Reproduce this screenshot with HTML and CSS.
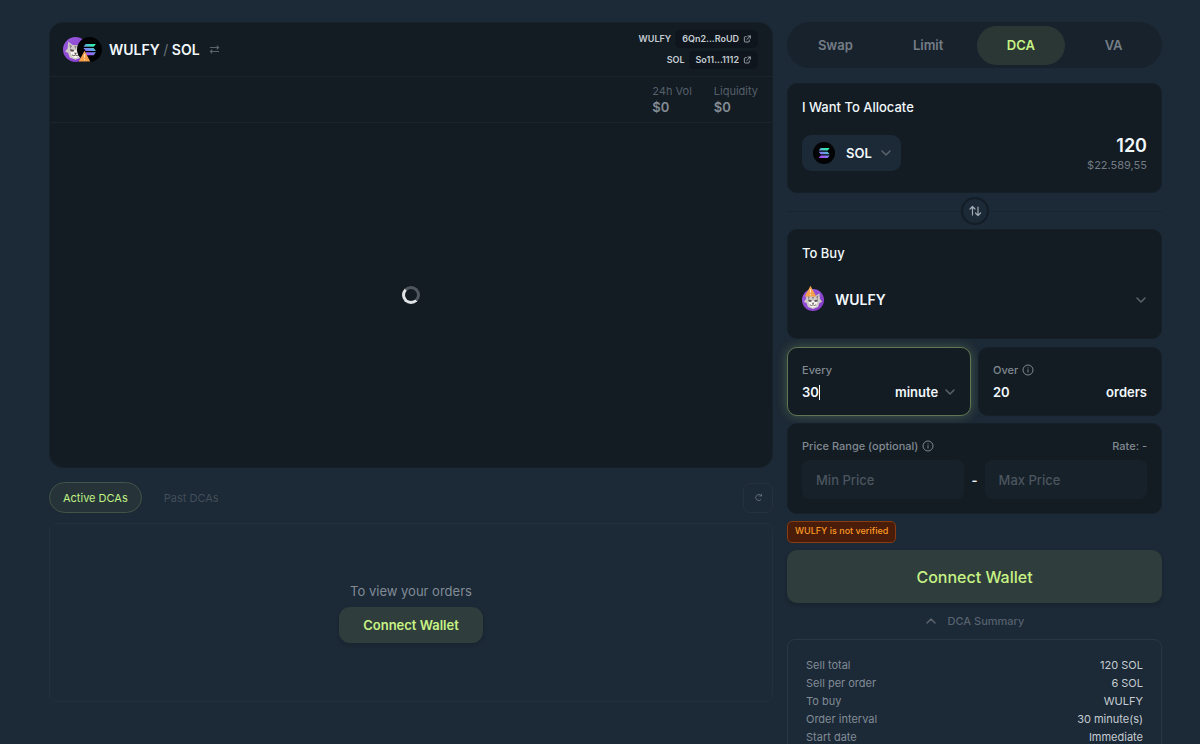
FILE: index.html
```html
<!DOCTYPE html>
<html lang="en">
<head>
  <meta charset="UTF-8">
  <meta name="viewport" content="width=device-width, initial-scale=1.0">
  <title>DCA | WULFY / SOL</title>
  <link rel="stylesheet" href="styles.css">
</head>
<body>
  <!-- Shared icons -->
  <svg class="sprite" aria-hidden="true">
    <defs>
      <linearGradient id="sol-fill" x1="0.2" y1="1" x2="0.8" y2="0">
        <stop offset="0" stop-color="#b045fb"/>
        <stop offset="0.5" stop-color="#6f93ea"/>
        <stop offset="0.9" stop-color="#2ff0ac"/>
      </linearGradient>
      <linearGradient id="wulfy-fill" x1="0" y1="0" x2="1" y2="1">
        <stop offset="0" stop-color="#9a5ce0"/>
        <stop offset="1" stop-color="#8238c4"/>
      </linearGradient>
    </defs>
    <symbol id="icon-sol" viewBox="0 0 24 24">
      <circle cx="12" cy="12" r="12" fill="#020304"/>
      <path fill="url(#sol-fill)" d="M8.4 6.600H18.200l-2.200 2.800H6.200zM6.200 10.600h9.800l2.200 2.800H8.400zM8.400 14.600H18.200l-2.200 2.800H6.200z"/>
    </symbol>
    <symbol id="icon-wulfy" viewBox="0 0 24 24">
      <circle cx="12" cy="12" r="12" fill="url(#wulfy-fill)"/>
      <path fill="#cfc9c8" d="M5 4.500l4.300 3.200h5.400L19 4.500l.6 6.500 2.400 3-3 1.400-1.400 4.200-5.600 2.200-5.600-2.200L5 15.400 2 14l2.400-3z"/>
      <path fill="#8b7f80" d="M6.200 6.800l2.400 2-1.800 2.400zM17.800 6.800l-2.400 2 1.800 2.400zM10.800 8.400h2.400L12 11.800z"/>
      <path fill="#f7f5ee" d="M7 14.400l5-1.800 5 1.800-1.800 4.600-3.200 1.400L8.800 19z"/>
      <path fill="#5b5055" d="M6.800 11.400l3.800 1-.6 1.800-2.800-.6zM17.200 11.400l-3.800 1 .6 1.800 2.800-.6zM10.600 15h2.800L12 17z"/>
      <path fill="none" stroke="#574b50" stroke-width=".9" d="M8.600 17.200q1.800 1.600 3.400 0 1.600 1.600 3.400 0"/>
    </symbol>
    <symbol id="icon-warning" viewBox="0 0 24 24">
      <path fill="#f5a04a" d="M12 1.500L23.500 23H.5z"/>
      <path fill="#ffe3b8" d="M10.700 8h2.600l-.5 8h-1.600zM10.800 18h2.400v2.400h-2.400z"/>
    </symbol>
    <symbol id="icon-chevron" viewBox="0 0 12 12">
      <path fill="none" stroke="currentColor" stroke-width="1.500" stroke-linecap="round" stroke-linejoin="round" d="M2 4l4 4 4-4"/>
    </symbol>
    <symbol id="icon-info" viewBox="0 0 12 12">
      <circle cx="6" cy="6" r="5" fill="none" stroke="currentColor"/>
      <path fill="none" stroke="currentColor" d="M6 5.300v3.200M6 3.400v1"/>
    </symbol>
    <symbol id="icon-external" viewBox="0 0 12 12">
      <path fill="none" stroke="currentColor" stroke-width="1.100" stroke-linecap="round" stroke-linejoin="round" d="M5 2.500H3.500q-1.500 0-1.500 1.500v5q0 1.500 1.500 1.500h4.500q1.500 0 1.500-1.500V7.500M7.500 1.500h3.500V5M11 1.500L5.500 7"/>
    </symbol>
  </svg>

  <main class="layout">
    <div class="market">
      <section class="chart">
        <header class="pair">
          <div class="pair-icons">
            <svg class="pair-coin"><use href="#icon-wulfy"/></svg>
            <svg class="pair-coin overlap"><use href="#icon-sol"/></svg>
            <svg class="pair-warning"><use href="#icon-warning"/></svg>
          </div>
          <h1>WULFY <span>/</span> SOL</h1>
          <button class="pair-flip" type="button" aria-label="Flip pair">
            <svg viewBox="0 0 12 12" width="11" height="11"><path fill="none" stroke="currentColor" stroke-width="1.200" d="M1 3.800H10.500M8.500 1.800l2 2-2 2M11 8.200H1.500M3.500 6.200l-2 2 2 2"/></svg>
          </button>
          <div class="addresses">
            <div class="address">WULFY <a href="#">6Qn2...RoUD <svg class="icon-small"><use href="#icon-external"/></svg></a></div>
            <div class="address">SOL <a href="#">So11...1112 <svg class="icon-small"><use href="#icon-external"/></svg></a></div>
          </div>
        </header>
        <dl class="stats">
          <div>
            <dt>24h Vol</dt>
            <dd>$0</dd>
          </div>
          <div>
            <dt>Liquidity</dt>
            <dd>$0</dd>
          </div>
        </dl>
        <div class="chart-body">
          <div class="spinner"></div>
        </div>
      </section>

      <nav class="order-tabs">
        <button class="order-tab active" type="button">Active DCAs</button>
        <button class="order-tab" type="button">Past DCAs</button>
        <button class="refresh" type="button" aria-label="Refresh">
          <svg viewBox="0 0 12 12" width="9" height="9"><path fill="none" stroke="currentColor" stroke-width="1.200" d="M9.500 8.500A4 4 0 1 1 9.500 3.500M10 1v3H7"/></svg>
        </button>
      </nav>

      <section class="orders">
        <p>To view your orders</p>
        <button class="connect-small" type="button">Connect Wallet</button>
      </section>
    </div>

    <div class="trade">
      <nav class="modes">
        <button type="button">Swap</button>
        <button type="button">Limit</button>
        <button class="active" type="button">DCA</button>
        <button type="button">VA</button>
      </nav>

      <section class="card token-card">
        <label for="amount">I Want To Allocate</label>
        <div class="row token-row">
          <button class="token-select" type="button">
            <svg class="coin"><use href="#icon-sol"/></svg>
            SOL
            <svg class="chevron"><use href="#icon-chevron"/></svg>
          </button>
          <div class="amount">
            <input id="amount" type="text" value="120">
            <span>$22.589,55</span>
          </div>
        </div>
      </section>

      <div class="divider">
        <button type="button" aria-label="Switch tokens">
          <svg viewBox="0 0 14 14" width="14" height="14"><path fill="none" stroke="currentColor" stroke-width="1.200" stroke-linecap="round" stroke-linejoin="round" d="M4.500 11V2.500M2 5l2.500-2.500L7 5M10 3v8.500M7.500 9l2.500 2.500L12.500 9"/></svg>
        </button>
      </div>

      <section class="card token-card">
        <h2>To Buy</h2>
        <button class="buy-select" type="button">
          <span class="coin-wrap">
            <svg class="coin"><use href="#icon-wulfy"/></svg>
            <svg class="coin-warning"><use href="#icon-warning"/></svg>
          </span>
          WULFY
          <svg class="chevron"><use href="#icon-chevron"/></svg>
        </button>
      </section>

      <div class="schedule">
        <div class="card field focused">
          <label for="every">Every</label>
          <div class="row">
            <span class="typed"><input id="every" type="text" value="30"><i class="caret"></i></span>
            <span class="unit">
              <select aria-label="Interval unit">
                <option>minute</option>
                <option>hour</option>
                <option>day</option>
                <option>week</option>
              </select>
              <svg class="chevron"><use href="#icon-chevron"/></svg>
            </span>
          </div>
        </div>
        <div class="card field">
          <label for="over">Over <svg class="icon-info"><use href="#icon-info"/></svg></label>
          <div class="row">
            <input id="over" type="text" value="20">
            <span>orders</span>
          </div>
        </div>
      </div>

      <section class="card range">
        <div class="row range-head">
          <span class="range-title">Price Range (optional) <svg class="icon-info"><use href="#icon-info"/></svg></span>
          <span>Rate: -</span>
        </div>
        <div class="range-inputs">
          <input type="text" placeholder="Min Price" aria-label="Min Price">
          <span>-</span>
          <input type="text" placeholder="Max Price" aria-label="Max Price">
        </div>
      </section>

      <div class="unverified">WULFY is not verified</div>
      <button class="connect" type="button">Connect Wallet</button>
      <button class="summary-toggle" type="button">
        <svg class="chevron up"><use href="#icon-chevron"/></svg>
        DCA Summary
      </button>

      <dl class="summary">
        <div class="row"><dt>Sell total</dt><dd>120 SOL</dd></div>
        <div class="row"><dt>Sell per order</dt><dd>6 SOL</dd></div>
        <div class="row"><dt>To buy</dt><dd>WULFY</dd></div>
        <div class="row"><dt>Order interval</dt><dd>30 minute(s)</dd></div>
        <div class="row"><dt>Start date</dt><dd>Immediate</dd></div>
      </dl>
    </div>
  </main>
</body>
</html>
```

FILE: styles.css
```css
* {
  box-sizing: border-box;
}
html {
  scrollbar-width: none;
}
body {
  margin: 0;
  background: #1c2936;
  color: #f1f8fb;
  font-family: Inter, sans-serif;
  font-size: 13px;
  line-height: 18px;
}
h1, h2, p, dl, dd {
  margin: 0;
}
button, input, select {
  margin: 0;
  padding: 0;
  border: 0;
  outline: 0;
  background: none;
  color: inherit;
  font: inherit;
}
button {
  cursor: pointer;
}
svg {
  flex-shrink: 0;
}
.sprite {
  position: absolute;
  width: 0;
  height: 0;
}
.layout {
  display: grid;
  grid-template-columns: minmax(0, 1fr) 375px;
  gap: 14px;
  padding: 22px 38px 24px 49px;
}
.row {
  display: flex;
  align-items: center;
  justify-content: space-between;
}
.chevron {
  width: 12px;
  height: 12px;
  color: #5b646d;
}
.chevron.up {
  transform: rotate(180deg);
}

/* Chart */
.chart {
  display: flex;
  flex-direction: column;
  height: 446px;
  background: #131b23;
  border: 1px solid #17212a;
  border-radius: 14px;
}
.pair {
  display: flex;
  align-items: center;
  height: 54px;
  padding: 0 14px 0 13px;
  border-bottom: 1px solid #1a242e;
}
.pair-icons {
  position: relative;
  display: flex;
  margin-right: 7px;
}
.pair-coin {
  width: 25px;
  height: 25px;
}
.pair-coin.overlap {
  margin-left: -11px;
}
.pair-warning {
  position: absolute;
  left: 15px;
  bottom: 0;
  width: 13px;
  height: 12px;
}
.pair h1 {
  font-size: 14px;
  font-weight: 600;
}
.pair h1 span {
  color: #68727c;
  font-weight: 400;
}
.pair-flip {
  display: flex;
  margin-left: 9px;
  color: #5b646d;
}
.addresses {
  display: flex;
  flex-direction: column;
  align-items: flex-end;
  gap: 3px;
  margin-left: auto;
}
.address {
  display: flex;
  align-items: center;
  gap: 4px;
  color: #c5cdd3;
  font-size: 9px;
  font-weight: 600;
}
.address a {
  display: flex;
  align-items: center;
  gap: 4px;
  padding: 0 7px;
  border-radius: 5px;
  background: #0e151c;
  color: inherit;
  text-decoration: none;
}
.icon-small {
  width: 8px;
  height: 8px;
}
.stats {
  display: flex;
  justify-content: flex-end;
  gap: 22px;
  height: 46px;
  padding: 6px 14px 0;
  border-bottom: 1px solid #1a242e;
  font-size: 11px;
  line-height: 16px;
}
.stats dt {
  color: #56606a;
}
.stats dd {
  color: #838c94;
  font-size: 13px;
  font-weight: 600;
}
.chart-body {
  display: grid;
  flex: 1;
  place-items: center;
}
.spinner {
  width: 18px;
  height: 18px;
  border: 3px solid #50575e;
  border-bottom-color: #dfe3e5;
  border-left-color: #dfe3e5;
  border-radius: 50%;
}

/* Orders */
.order-tabs {
  display: flex;
  align-items: center;
  gap: 8px;
  margin: 14px 0 10px;
}
.order-tab {
  height: 31px;
  padding: 0 13px;
  border: 1px solid transparent;
  border-radius: 16px;
  color: #424e59;
  font-size: 11px;
}
.order-tab.active {
  border-color: #425347;
  background: #263439;
  color: #c0f284;
}
.refresh {
  display: grid;
  place-items: center;
  width: 30px;
  height: 30px;
  margin-left: auto;
  border: 1px solid #25323e;
  border-radius: 7px;
  color: #65717c;
}
.orders {
  display: flex;
  flex-direction: column;
  align-items: center;
  justify-content: center;
  gap: 7px;
  height: 179px;
  border: 1px solid #22303c;
  border-radius: 7px;
  color: #818c96;
}
.connect-small {
  height: 36px;
  padding: 0 24px;
  border-radius: 11px;
  background: #2f3d3c;
  box-shadow: 0 2px 4px rgba(0, 0, 0, 0.12);
  color: #c7f284;
  font-weight: 600;
}

/* Trade form */
.trade {
  display: flex;
  flex-direction: column;
}
.modes {
  display: grid;
  grid-template-columns: repeat(4, 1fr);
  gap: 4px;
  margin-bottom: 15px;
  padding: 4px 4px 3px;
  border-radius: 23px;
  background: #18222c;
}
.modes button {
  height: 39px;
  padding-bottom: 1px;
  border-radius: 20px;
  color: #747e87;
  font-weight: 600;
}
.modes .active {
  background: #2a3734;
  color: #c7f284;
}
.card {
  border: 1px solid #151f28;
  border-radius: 10px;
  background: #131b23;
}
.token-card {
  height: 110px;
  padding: 14px;
}
.token-card label,
.token-card h2 {
  display: block;
  font-size: 13px;
  font-weight: 500;
}
.token-row {
  align-items: flex-start;
  margin-top: 19px;
}
.token-select {
  display: flex;
  align-items: center;
  gap: 11px;
  height: 36px;
  padding: 0 9px 0 11px;
  border-radius: 9px;
  background: #1c2936;
  font-weight: 600;
}
.token-select .chevron {
  margin-left: -3px;
}
.coin {
  display: block;
  width: 22px;
  height: 22px;
}
.amount {
  display: flex;
  flex-direction: column;
  align-items: flex-end;
}
.amount input {
  width: 100px;
  height: 21px;
  text-align: right;
  font-size: 18px;
  font-weight: 600;
}
.amount span {
  color: #727b84;
  font-size: 11px;
}
.divider {
  display: flex;
  align-items: center;
  height: 36px;
}
.divider::before,
.divider::after {
  content: "";
  flex: 1;
  height: 1px;
  background: #182430;
}
.divider button {
  display: grid;
  place-items: center;
  width: 28px;
  height: 28px;
  border: 2px solid #131d27;
  border-radius: 50%;
  color: #a0abb4;
}
.buy-select {
  display: flex;
  align-items: center;
  gap: 11px;
  width: 100%;
  height: 36px;
  margin-top: 20px;
  font-size: 14px;
  font-weight: 600;
}
.buy-select .chevron {
  margin-left: auto;
}
.coin-wrap {
  position: relative;
}
.coin-warning {
  position: absolute;
  top: -4px;
  left: 2px;
  width: 13px;
  height: 12px;
}
.schedule {
  display: grid;
  grid-template-columns: 1fr 1fr;
  gap: 7px;
  margin: 8px 0 7px;
}
.field {
  height: 69px;
  padding: 13px 14px;
  font-weight: 600;
}
.field.focused {
  border-color: #617653;
  box-shadow: 0 0 12px rgba(199, 242, 132, 0.25);
}
.field label,
.range-title {
  display: flex;
  align-items: center;
  gap: 4px;
  color: #808990;
  font-size: 11px;
  font-weight: 500;
}
.field .row {
  margin-top: 4px;
}
.icon-info {
  width: 12px;
  height: 12px;
}
.field input {
  width: 60px;
  height: 18px;
}
.typed {
  display: flex;
  align-items: center;
}
.typed input {
  width: 17px;
  caret-color: transparent;
}
.caret {
  width: 1px;
  height: 15px;
  background: #f1f8fb;
}
.unit {
  display: flex;
  align-items: center;
  gap: 5px;
}
.unit select {
  appearance: none;
}
.range {
  height: 91px;
  padding: 13px 14px;
}
.range-head {
  color: #808990;
  font-size: 11px;
  font-weight: 500;
}
.range-inputs {
  display: flex;
  align-items: center;
  gap: 7px;
  margin-top: 5px;
  font-weight: 600;
}
.range-inputs input {
  flex: 1;
  min-width: 0;
  height: 39px;
  padding: 0 14px;
  border-radius: 7px;
  background: #17212a;
  font-weight: 500;
}
.range-inputs input::placeholder {
  color: #4b555e;
}
.unverified {
  align-self: flex-start;
  margin: 7px 0;
  padding: 1px 7px 3px;
  border: 1px solid #8a3b10;
  border-radius: 5px;
  background: #4a1c0a;
  color: #fb9a24;
  font-size: 9px;
  font-weight: 500;
  line-height: 16px;
}
.connect {
  height: 53px;
  border-radius: 10px;
  background: #2f3d3c;
  box-shadow: 0 2px 4px rgba(0, 0, 0, 0.15);
  color: #c7f284;
  font-size: 16px;
  font-weight: 500;
}
.summary-toggle {
  display: flex;
  align-items: center;
  align-self: center;
  gap: 11px;
  margin: 9px 0;
  color: #56626e;
  font-size: 11px;
  font-weight: 500;
}
.summary {
  padding: 16px 18px;
  border: 1px solid #2a3743;
  border-radius: 8px;
  font-size: 11px;
}
.summary dt {
  color: #818c96;
}
.summary dd {
  color: #c5cdd3;
}
```
